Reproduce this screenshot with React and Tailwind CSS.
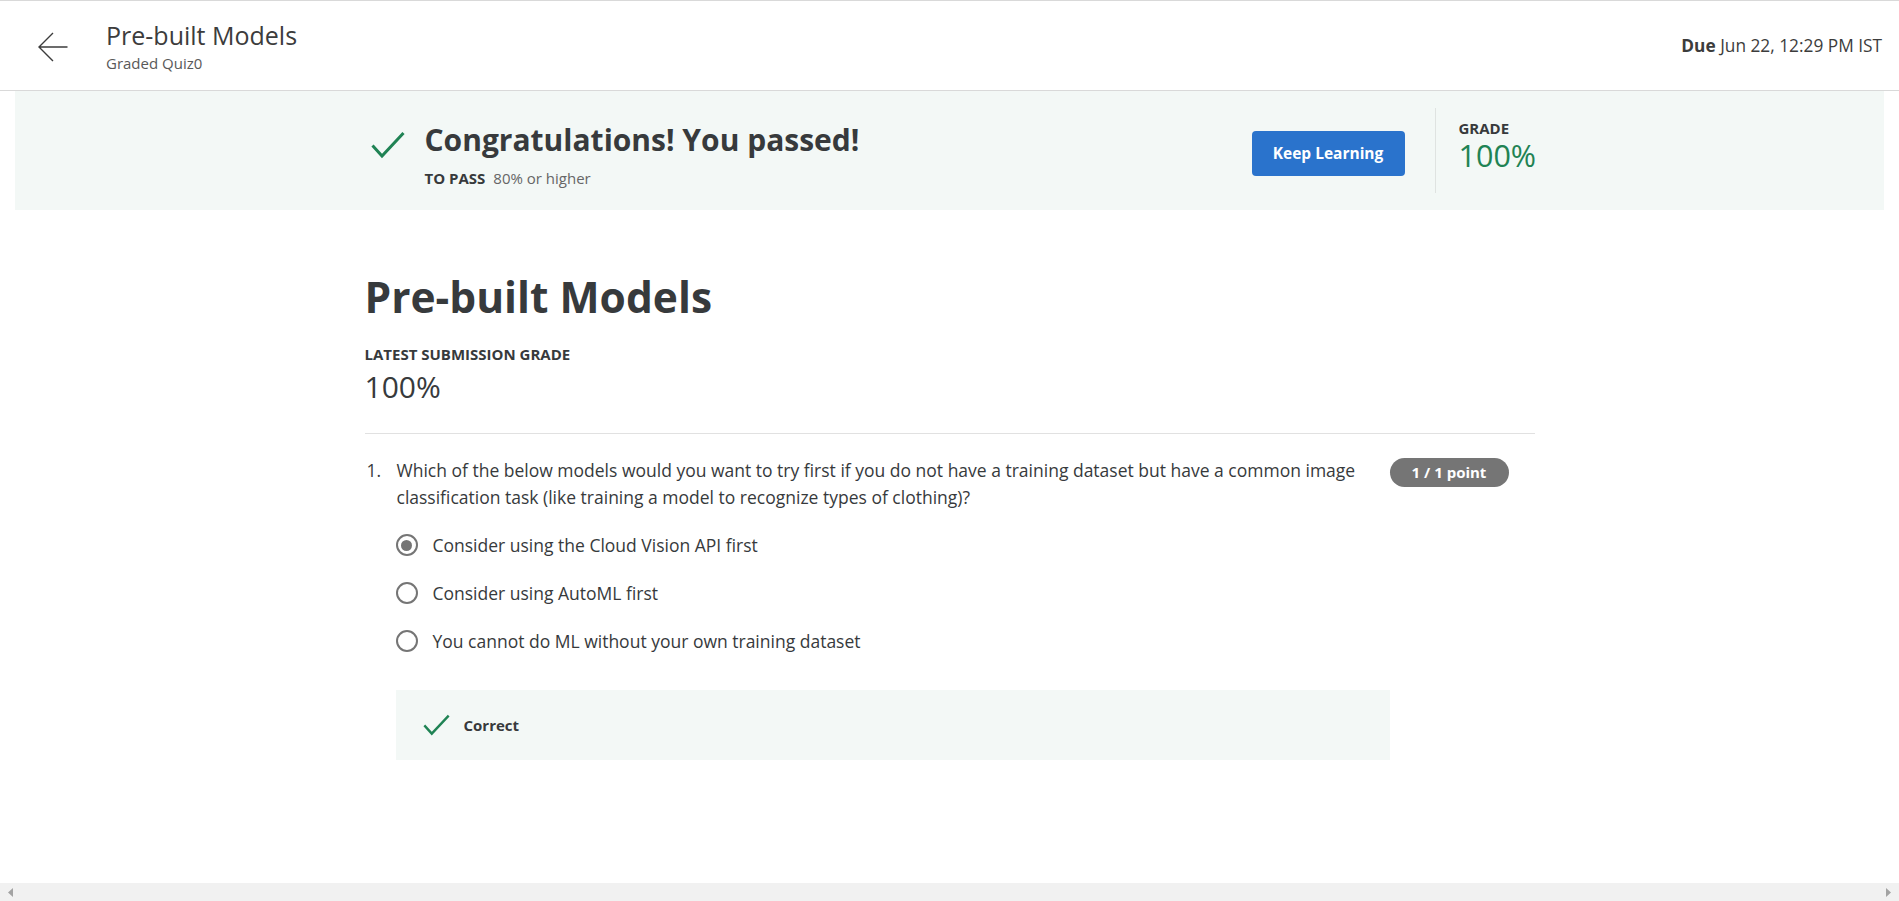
export default function App() {
  const Check = ({ w, h, sw, className }) => (
    <svg width={w} height={h} viewBox="0 0 34 28" fill="none" stroke="#1f8354" strokeWidth={sw} className={className}>
      <path d="M1.5 14.5L11 25L32.5 2" />
    </svg>
  );
  const Radio = ({ checked }) => (
    <div className="w-[22px] h-[22px] shrink-0 rounded-full border-2 border-[#757575] flex items-center justify-center">
      {checked && <div className="w-[11px] h-[11px] rounded-full bg-[#757575]" />}
    </div>
  );
  const options = [
    ["Consider using the Cloud Vision API first", true],
    ["Consider using AutoML first", false],
    ["You cannot do ML without your own training dataset", false],
  ];
  return (
    <div className="h-[901px] w-full flex flex-col bg-white font-['Open_Sans',sans-serif] text-[#373a3c] overflow-hidden">
      <header className="h-[91px] shrink-0 border-t border-b border-[#d9d9d9] flex items-center pl-[38px] pr-[17px]">
        <svg width="30" height="30" viewBox="0 0 30 30" className="shrink-0 mt-[2px]" fill="none" stroke="#3c3c3c" strokeWidth="1.4">
          <path d="M29.5 15H1M15 1L1 15l14 14" />
        </svg>
        <div className="ml-[38px] mt-[2px] flex flex-col">
          <div className="text-[25px] leading-[32px] text-[#3c3c3c]">Pre-built Models</div>
          <div className="text-[15px] leading-[24px] text-[#595959]">Graded Quiz0</div>
        </div>
        <div className="ml-auto text-[17.3px] text-[#3c3c3c]">
          <span className="font-bold">Due</span> Jun 22, 12:29 PM IST
        </div>
      </header>

      <section className="mx-[15px] h-[119px] shrink-0 bg-[#f3f8f6] flex">
        <div className="w-[1170px] mx-auto flex">
          <div className="flex items-start mt-[29px]">
            <Check w={34} h={28} sw={3} className="ml-[6px] mt-[11px] shrink-0" />
            <div className="ml-[20px] flex flex-col">
              <div className="text-[30px] leading-[40px] font-bold">Congratulations! You passed!</div>
              <div className="mt-[8px] text-[15px] leading-[20px] flex">
                <span className="font-bold">TO PASS</span>
                <span className="ml-[8px] text-[#666]">80% or higher</span>
              </div>
            </div>
          </div>
          <div className="ml-auto flex items-center">
            <button className="mt-[6px] w-[153px] h-[45px] rounded-[4px] bg-[#2a73cc] text-white text-[15.5px] font-bold">
              Keep Learning
            </button>
            <div className="ml-[30px] w-px h-[85px] bg-[#dfe3e1]" />
            <div className="ml-[23px] w-[76px] mb-[4px] flex flex-col">
              <div className="text-[15px] leading-[12px] font-bold">GRADE</div>
              <div className="text-[30.5px] leading-[42px] text-[#1f8354]">100%</div>
            </div>
          </div>
        </div>
      </section>

      <main className="flex-1 w-[1170px] mx-auto">
        <h1 className="mt-[61px] text-[42.5px] leading-[52px] font-bold">Pre-built Models</h1>
        <div className="mt-[21px] text-[15px] leading-[20px] font-bold">LATEST SUBMISSION GRADE</div>
        <div className="mt-[5px] text-[30px] leading-[36px]">100%</div>
        <div className="mt-[28px] h-px bg-[#e1e1e1]" />

        <div className="pt-[23px] flex">
          <div className="w-[1025px] shrink-0">
            <div className="flex text-[17.5px] leading-[27px]">
              <span className="w-[32px] pl-[2px] shrink-0">1.</span>
              <div>
                <div className="whitespace-nowrap">Which of the below models would you want to try first if you do not have a training dataset but have a common image</div>
                <div className="whitespace-nowrap">classification task (like training a model to recognize types of clothing)?</div>
              </div>
            </div>
            <div className="ml-[31px] mt-[10px] flex flex-col">
              {options.map(([t, c]) => (
                <div key={t} className="h-[48px] flex items-center">
                  <Radio checked={c} />
                  <span className="ml-[15px] text-[17.5px] leading-[24px]">{t}</span>
                </div>
              ))}
            </div>
            <div className="ml-[31px] mt-[25px] h-[70px] bg-[#f3f8f6] flex items-center pl-[27px]">
              <Check w={27} h={22} sw={3} className="shrink-0" />
              <span className="ml-[14px] text-[15px] font-bold">Correct</span>
            </div>
          </div>
          <div className="mt-[1px] h-[29px] w-[119px] shrink-0 rounded-full bg-[#757575] text-white text-[15px] font-bold flex items-center justify-center">
            1 / 1 point
          </div>
        </div>
      </main>

      <div className="h-[18px] shrink-0 bg-[#f1f1f1] flex items-center justify-between px-[8px]">
        <svg width="5" height="9" viewBox="0 0 5 9"><path d="M5 0L0 4.5L5 9Z" fill="#a3a3a3" /></svg>
        <svg width="5" height="9" viewBox="0 0 5 9"><path d="M0 0L5 4.5L0 9Z" fill="#a3a3a3" /></svg>
      </div>
    </div>
  );
}
